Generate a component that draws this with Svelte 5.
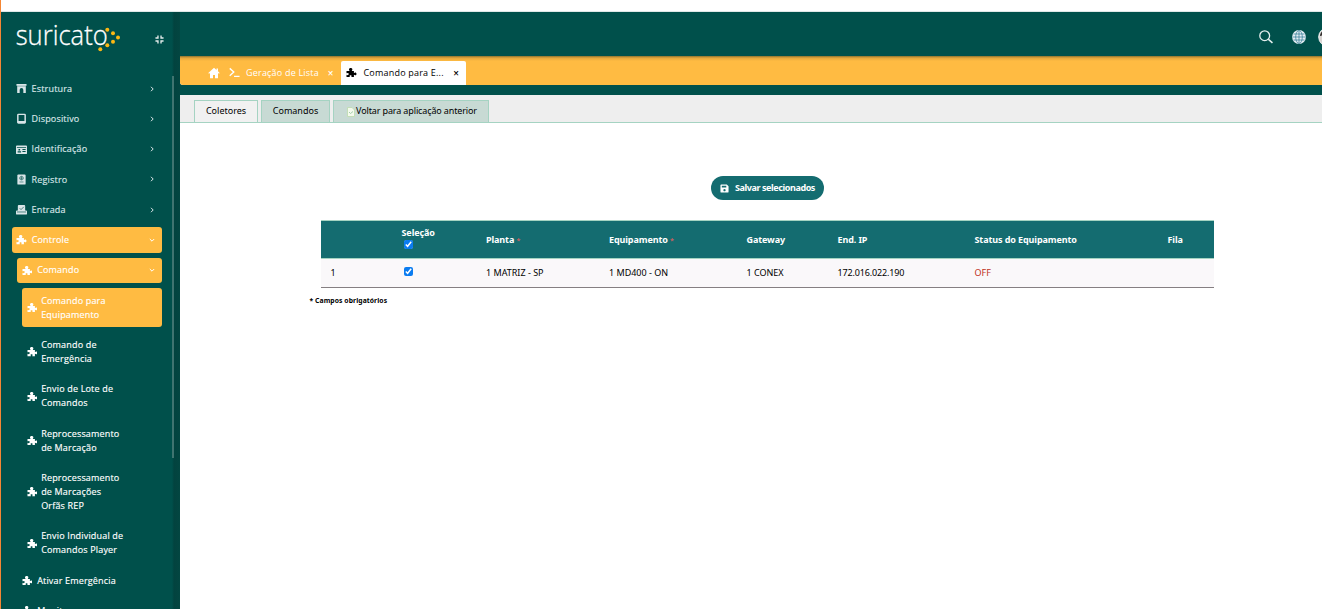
<script lang="ts">
  const sections = [
    { label: "Estrutura", icon: "gate" },
    { label: "Dispositivo", icon: "tablet" },
    { label: "Identificação", icon: "card" },
    { label: "Registro", icon: "passport" },
    { label: "Entrada", icon: "vote" },
  ];

  const commands = [
    { lines: ["Comando para", "Equipamento"], active: true },
    { lines: ["Comando de", "Emergência"] },
    { lines: ["Envio de Lote de", "Comandos"] },
    { lines: ["Reprocessamento", "de Marcação"] },
    { lines: ["Reprocessamento", "de Marcações", "Orfãs REP"] },
    { lines: ["Envio Individual de", "Comandos Player"] },
  ];

  let all = $state(true);
  let checked = $state(true);
</script>

{#snippet puzzle()}
  <svg class="puzzle" viewBox="0 0 11 10">
    <path fill="currentColor" d="M.5 3.200H3.600C3.900 2.700 3.100 2.300 3.100 1.500 3.100.6 3.900 0 4.900 0S6.700.6 6.700 1.500C6.700 2.300 5.900 2.700 6.200 3.200H8.300V5.200C8.700 5.600 9 4.800 9.700 4.800 10.500 4.800 11 5.400 11 6.200S10.500 7.600 9.700 7.600C9 7.600 8.700 6.900 8.300 7.200V9.800H5.600C5.300 9.300 5.900 9 5.900 8.400 5.900 7.800 5.400 7.500 4.800 7.500S3.700 7.800 3.700 8.400C3.700 9 4.300 9.300 4 9.800H.5V7.300C.9 7 1.200 7.600 1.800 7.600 2.400 7.600 2.800 7 2.800 6.400S2.400 5.200 1.800 5.200C1.200 5.200.9 5.800.5 5.500z" />
  </svg>
{/snippet}

{#snippet menuIcon(name)}
  <svg class="icon" viewBox="0 0 12 12">
    {#if name === "gate"}
      <path fill="currentColor" d="M.5 1h11v2h-.8v8H8V7.500a2 2 0 0 0-4 0V11H1.300V3H.5z" />
      <path d="M1.300 3.400h9.400" stroke="#00504b" stroke-width=".4" />
    {:else if name === "tablet"}
      <rect x="2" y="1.500" width="8" height="9.300" rx=".6" fill="none" stroke="currentColor" stroke-width="1.600" />
      <path d="M1.700 9.800h8.600" stroke="currentColor" stroke-width="2.200" />
    {:else if name === "card"}
      <path fill="currentColor" fill-rule="evenodd" d="M1 1.500h10q1 0 1 1v7.500q0 1-1 1H1q-1 0-1-1V2.500q0-1 1-1zM1 3.500v.8h10v-.8zM1.800 9.200h3.700V8H1.800zM2.700 5.500v1.600h1.800V5.500zM7 5.500v1h3.500v-1zM7 7.700v1h3.500v-1z" />
    {:else if name === "passport"}
      <rect x="1.500" y=".5" width="9" height="11" rx="1" fill="currentColor" />
      <circle cx="6" cy="4.500" r="2" fill="none" stroke="#00504b" stroke-width=".6" />
      <path d="M4 4.500h4M6 2.500v4M3.800 8.700h4.400" stroke="#00504b" stroke-width=".6" />
    {:else}
      <path fill="currentColor" d="M2 2.200q0-1 1-1h6q1 0 1 1V7h1q1 0 1 1v2.500q0 1-1 1H1q-1 0-1-1V8q0-1 1-1h1z" />
      <path d="M4 4.600l1.500 1.500 3-3M1 8.700h10" fill="none" stroke="#00504b" stroke-width=".7" />
    {/if}
  </svg>
{/snippet}

{#snippet chevron(open)}
  <svg class="chevron" class:open viewBox="0 0 6 6">
    <path d="M2 .8l2.200 2.200L2 5.200" fill="none" stroke="currentColor" stroke-width="1" />
  </svg>
{/snippet}

<div class="page">
  <div class="strip"></div>
  <div class="app">
    <aside>
      <div class="brand">
        <svg class="logo" viewBox="0 0 110 38">
          <text x="-.3" y="28" textLength="92" lengthAdjust="spacingAndGlyphs">suricato</text>
          <g fill="#fcb813">
            <circle cx="91.300" cy="12.700" r="2" />
            <circle cx="97" cy="16.200" r="2" />
            <circle cx="102" cy="20.500" r="2" />
            <circle cx="97" cy="24.700" r="2" />
            <circle cx="91.300" cy="28.300" r="2" />
            <circle cx="84.300" cy="32.200" r="2" />
          </g>
        </svg>
        <svg class="compress" viewBox="0 0 10 10">
          <path d="M.5 3.300h2.800v-2.800M6.700 .5v2.800h2.800M.5 6.700h2.800v2.800M9.500 6.700h-2.800v2.800" fill="none" stroke="currentColor" stroke-width="1.500" />
        </svg>
      </div>

      <nav>
        {#each sections as s}
          <div class="item">
            {@render menuIcon(s.icon)}
            <span>{s.label}</span>
            {@render chevron(false)}
          </div>
        {/each}
        <div class="item active">
          {@render puzzle()}
          <span>Controle</span>
          {@render chevron(true)}
        </div>
        <div class="item sub active">
          {@render puzzle()}
          <span>Comando</span>
          {@render chevron(true)}
        </div>
        {#each commands as c}
          <div class="item leaf" class:active={c.active}>
            {@render puzzle()}
            <span>{#each c.lines as line}<span class="line">{line}</span>{/each}</span>
          </div>
        {/each}
        <div class="item sub light">
          {@render puzzle()}
          <span>Ativar Emergência</span>
        </div>
        <div class="item sub light">
          {@render puzzle()}
          <span>Monitor</span>
        </div>
      </nav>
      <div class="scrollbar"></div>
    </aside>

    <main>
      <header>
        <svg class="search" viewBox="0 0 14 14">
          <circle cx="5.700" cy="5.700" r="4.900" fill="none" stroke="currentColor" stroke-width="1.300" />
          <path d="M9.200 9.200l4.300 3.700" stroke="currentColor" stroke-width="1.600" />
        </svg>
        <svg class="globe" viewBox="0 0 14 14">
          <circle cx="7" cy="7" r="6.900" fill="#e4edf3" />
          <g fill="none" stroke="#2d7a94" stroke-width=".7">
            <ellipse cx="7" cy="7" rx="3.300" ry="6.500" />
            <path d="M7 .5v13M.5 7h13M1.500 4h11M1.500 10h11" />
          </g>
        </svg>
        <svg class="avatar" viewBox="0 0 20 20">
          <circle cx="10" cy="10" r="9.300" fill="#d7d3d1" stroke="#f2f2f2" />
          <path d="M2 8q2-6 8-6v8H7L6 8l-4 1z" fill="#332f2e" />
        </svg>
      </header>

      <div class="tabs">
        <svg class="home" viewBox="0 0 12 12">
          <path fill="currentColor" d="M6 .8L.3 6l.7.8 1-.8v5.300h3V8h2v3.300h3V6l1 .8.700-.8L10 4.300V1.500H8.500v1.500z" />
        </svg>
        <div class="tab">
          <svg class="terminal" viewBox="0 0 12 12">
            <path d="M.8 1.500l4.400 4-4.400 4M5.500 10.200h6" fill="none" stroke="currentColor" stroke-width="1.500" />
          </svg>
          <span class="tab-title">Geração de Lista</span>
          <span class="close">×</span>
        </div>
        <div class="tab selected">
          {@render puzzle()}
          <span class="tab-title">Comando para E...</span>
          <span class="close">×</span>
        </div>
      </div>

      <div class="subtabs">
        <div class="subtab current">Coletores</div>
        <div class="subtab second">Comandos</div>
        <div class="subtab back">
          <svg viewBox="0 0 8 10">
            <path d="M.5 .5h4.500l2.500 2.500v6.500h-7z" fill="#f4faed" stroke="#bddaac" stroke-width=".8" />
            <path d="M2 5l1.500 1.500L6 4.500" fill="none" stroke="#a3cfab" />
          </svg>
          <span>Voltar para aplicação anterior</span>
        </div>
      </div>

      <section>
        <button class="save">
          <svg viewBox="0 0 10 10">
            <path fill="currentColor" fill-rule="evenodd" d="M1.500.5h6l2 2v6q0 1-1 1h-7q-1 0-1-1v-7q0-1 1-1zM2 2v2h5V2zM5 5.500a1.300 1.300 0 1 0 .01 0z" />
          </svg>
          <span>Salvar selecionados</span>
        </button>

        <table>
          <colgroup>
            <col style="width: 71px" /><col style="width: 85px" /><col style="width: 123px" />
            <col style="width: 137px" /><col style="width: 91px" /><col style="width: 137px" />
            <col style="width: 193px" /><col style="width: 56px" />
          </colgroup>
          <thead>
            <tr>
              <th></th>
              <th><div class="select">Seleção<input type="checkbox" bind:checked={all} /></div></th>
              <th>Planta <i>*</i></th>
              <th>Equipamento <i>*</i></th>
              <th>Gateway</th>
              <th>End. IP</th>
              <th>Status do Equipamento</th>
              <th>Fila</th>
            </tr>
          </thead>
          <tbody>
            <tr>
              <td>1</td>
              <td><input type="checkbox" bind:checked={checked} /></td>
              <td>1 MATRIZ - SP</td>
              <td>1 MD400 - ON</td>
              <td>1 CONEX</td>
              <td class="ip">172.016.022.190</td>
              <td class="off">OFF</td>
              <td></td>
            </tr>
          </tbody>
        </table>
        <p class="note">* Campos obrigatórios</p>
      </section>
    </main>
  </div>
</div>

<style>
  :global(body) {
    margin: 0;
    overflow: hidden;
  }
  .page {
    width: 1322px;
    height: 609px;
    box-sizing: border-box;
    border-left: 1px solid #f58634;
    overflow: hidden;
    background: #fff;
    font-family: "Open Sans", sans-serif;
    font-size: 9px;
    color: #000;
  }
  svg {
    display: block;
    flex: none;
  }
  .strip {
    height: 12px;
    box-sizing: border-box;
    border-bottom: 1px solid #dfe8e7;
  }
  .app {
    display: flex;
    height: 597px;
  }

  aside {
    position: relative;
    width: 179px;
    flex: none;
    overflow: hidden;
    background: linear-gradient(90deg, #00504b 171px, #02433f 173px, #034641 179px);
  }
  .brand {
    display: flex;
    height: 64px;
    padding-left: 15px;
    box-sizing: border-box;
  }
  .logo {
    width: 110px;
    height: 38px;
    margin-top: 5px;
  }
  .logo text {
    font-family: "Open Sans", sans-serif;
    font-weight: 300;
    font-size: 28px;
    fill: #fff;
    stroke: #fff;
    stroke-width: 0.3px;
  }
  .compress {
    width: 9px;
    height: 9px;
    margin: 23px 0 0 29px;
    color: #e3eceb;
  }
  nav {
    display: flex;
    flex-direction: column;
    gap: 5px;
    padding-right: 18px;
    font-weight: 500;
    letter-spacing: 0.17px;
    -webkit-text-stroke: 0.15px;
  }
  .item {
    display: flex;
    align-items: center;
    flex: none;
    box-sizing: border-box;
    margin-left: 11px;
    padding: 5.7px 7px 5.7px 4px;
    border-radius: 3px;
    line-height: 13.9px;
    color: #d9e5e8;
  }
  .item.sub {
    margin-left: 16px;
    padding-left: 4.500px;
  }
  .item.leaf {
    margin-left: 21px;
    padding: 5.770px 7px 5.770px 4.500px;
  }
  .item.leaf,
  .item.light,
  .item.active {
    color: #fff;
  }
  .item.active {
    background: #ffbb42;
  }
  .line {
    display: block;
  }
  .icon {
    width: 11px;
    height: 11px;
    margin-right: 4.600px;
  }
  .puzzle {
    width: 10.500px;
    height: 9.500px;
    margin-right: 5.200px;
  }
  .leaf .puzzle {
    margin-right: 4.200px;
  }
  .chevron {
    width: 6px;
    height: 6px;
    margin-left: auto;
  }
  .chevron.open {
    transform: rotate(90deg);
  }
  .scrollbar {
    position: absolute;
    top: 64px;
    right: 6px;
    width: 2px;
    height: 382px;
    background: #3f7470;
  }

  main {
    flex: 1;
    min-width: 0;
    background: #fff;
  }
  header {
    display: flex;
    align-items: center;
    justify-content: flex-end;
    height: 44px;
    background: #00504b;
    color: #e4eeee;
    overflow: hidden;
  }
  header svg {
    position: relative;
    top: 3px;
  }
  .search {
    width: 14px;
    height: 14px;
    margin-right: 19px;
  }
  .globe {
    width: 14px;
    height: 14px;
    margin-right: 12px;
  }
  .avatar {
    width: 20px;
    height: 20px;
    margin-right: -16px;
  }
  .tabs {
    display: flex;
    align-items: flex-end;
    height: 29px;
    box-sizing: border-box;
    padding-left: 28px;
    border-bottom-left-radius: 3px;
    background: linear-gradient(#8b7130, #e2a63c 2px, #ffbb42 5px);
    box-shadow: -4px 4px 0 #00504b;
    color: #fff;
  }
  .home {
    width: 12px;
    height: 12px;
    margin-bottom: 6px;
  }
  .tab {
    display: flex;
    align-items: center;
    width: 121px;
    height: 24px;
    box-sizing: border-box;
    padding: 0 7.500px 1px 9px;
  }
  .terminal {
    width: 11px;
    height: 11px;
    margin-right: 6px;
  }
  .tab-title {
    font-weight: 500;
    letter-spacing: 0.2px;
  }
  .tab .close {
    margin-left: auto;
    font-size: 10px;
    font-weight: 600;
  }
  .tab.selected {
    width: 125px;
    padding: 0 7px 1px 5px;
    border-radius: 2px 2px 0 0;
    background: #fff;
    color: #000;
  }
  .selected .puzzle {
    margin-right: 7px;
  }

  .subtabs {
    display: flex;
    align-items: flex-end;
    gap: 3px;
    height: 38px;
    box-sizing: border-box;
    padding-left: 14px;
    border-top: 10px solid #00504b;
    border-bottom: 1px solid #a5d3c2;
    background: #eee;
    font-family: "Noto Sans", sans-serif;
  }
  .subtab {
    display: flex;
    align-items: center;
    justify-content: center;
    width: 64px;
    height: 22px;
    box-sizing: border-box;
    padding-bottom: 2px;
    border: 1px solid #a5d3c2;
    border-bottom: 0;
    background: #c8dad4;
  }
  .subtab.current {
    background: #f1f1f1;
  }
  .subtab.second {
    width: 69px;
  }
  .subtab.back {
    width: 156px;
    padding-left: 2px;
    letter-spacing: -0.13px;
  }
  .subtab svg {
    width: 8px;
    height: 10px;
    margin: 2px 1px 0 0;
  }

  section {
    padding: 53px 0 0 141px;
    font-family: "Noto Sans", sans-serif;
  }
  .save {
    display: flex;
    align-items: center;
    justify-content: center;
    width: 113px;
    height: 24px;
    margin-left: 390px;
    padding: 0 0 1px;
    border: 0;
    border-radius: 12px;
    background: #146c70;
    color: #fff;
    font: bold 9px "Noto Sans", sans-serif;
    letter-spacing: -0.42px;
  }
  .save svg {
    width: 9px;
    height: 9px;
    margin: 1px 6px 0 0;
  }
  table {
    width: 893px;
    margin-top: 20px;
    table-layout: fixed;
    border-collapse: separate;
    border-spacing: 0;
  }
  th,
  td {
    box-sizing: border-box;
    padding: 0 0 0 9.500px;
    text-align: left;
    white-space: nowrap;
  }
  th:nth-child(3),
  th:nth-child(4),
  td:nth-child(3),
  td:nth-child(4) {
    padding-left: 9px;
  }
  th {
    height: 39px;
    border-top: 1px solid #a5d3c2;
    border-bottom: 1px solid #a5d3c2;
    background: #146c70;
    color: #fff;
    font-weight: bold;
    letter-spacing: -0.1px;
  }
  th i {
    color: #f05c5c;
    font-size: 7px;
    font-style: normal;
    font-weight: normal;
  }
  td {
    height: 29px;
    padding-bottom: 2px;
    border-bottom: 1px solid #857f82;
    background: #faf8fa;
  }
  .select {
    display: flex;
    flex-direction: column;
    padding-bottom: 4px;
    line-height: 12px;
  }
  .select input {
    margin-top: 1px;
  }
  input {
    display: block;
    width: 9px;
    height: 9px;
    margin: 0 0 0 2.500px;
    accent-color: #0b7cf0;
  }
  td input {
    margin-bottom: 1px;
  }
  .ip {
    letter-spacing: -0.15px;
  }
  .off {
    color: #c03022;
  }
  .note {
    margin: 8px 0 0 -11.500px;
    font-size: 6.800px;
    font-weight: bold;
    line-height: 10px;
    letter-spacing: 0.07px;
  }
</style>
